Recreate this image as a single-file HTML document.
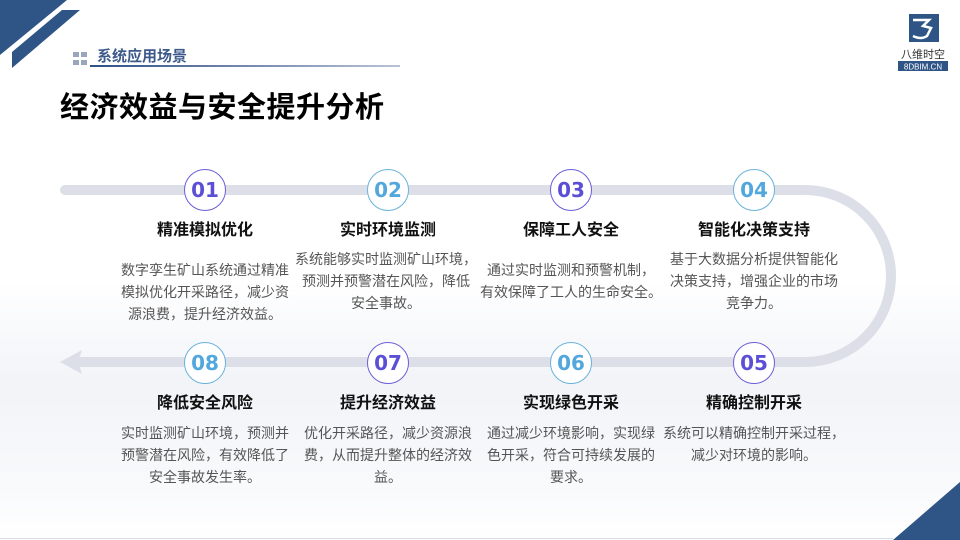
<!DOCTYPE html>
<html><head><meta charset="utf-8"><style>
body{margin:0;width:960px;height:540px;overflow:hidden;background:#fff;font-family:"Liberation Sans","Noto Sans CJK SC",sans-serif;position:relative}
.a{position:absolute}
.c{position:absolute;width:42px;height:42px;border-radius:50%;background:#fff;border:1.5px solid;box-sizing:border-box;text-align:center;line-height:40px;font-size:20px;font-weight:bold;font-family:"DejaVu Sans","Liberation Sans",sans-serif}
.p{color:#5b4fd6;border-color:#6a5fd8}
.b{color:#52a8dc;border-color:#6ab2dc}
.t{position:absolute;width:200px;text-align:center;font-size:16px;font-weight:bold;color:#111}
.d{position:absolute;width:220px;text-align:center;font-size:14px;line-height:22px;color:#555;white-space:nowrap}
</style></head><body>
<div class="a" style="left:0;top:280px;width:960px;height:260px;background:linear-gradient(180deg,#fff 0%,#eef1f6 40%,#f4f6f9 70%,#fff 100%);opacity:.8"></div>
<svg class="a" style="left:0;top:0" width="960" height="540">
<polygon points="0,0 67,0 0,55" fill="#2f5587"/>
<polygon points="62,10 80,10 12,68 12,52" fill="#2f5587"/>
<polygon points="893,540 960,482 960,540" fill="#2f5587"/>
<line x1="0" y1="538.5" x2="893" y2="538.5" stroke="#d8dbe2" stroke-width="1"/>
<defs><linearGradient id="g" x1="0" x2="1"><stop offset="0" stop-color="#2f4f85"/><stop offset="1" stop-color="#b9c3d6"/></linearGradient></defs>
<rect x="90" y="65" width="310" height="2" fill="url(#g)"/>
<rect x="73" y="52" width="6" height="5" fill="#9aa6bb"/><rect x="81" y="52" width="6" height="5" fill="#9aa6bb"/>
<rect x="73" y="60" width="6" height="5" fill="#9aa6bb"/><rect x="81" y="60" width="6" height="5" fill="#9aa6bb"/>
<path d="M65 190 H805 A86 86 0 0 1 805 362 H80" fill="none" stroke="#dcdfe8" stroke-width="10" stroke-linecap="round"/>
<polygon points="60,362 82,350 78,362 82,374" fill="#dcdfe8"/>
<rect x="909" y="14" width="30" height="28" fill="#2f5587"/>
<path d="M913 20 h16 l-6 6 l8 2 l-4 8 q-6 4 -14 0" fill="none" stroke="#fff" stroke-width="2.5"/>
<rect x="898" y="61" width="50" height="10" fill="#2f5587"/>
<text x="923" y="69.5" font-size="8" fill="#fff" text-anchor="middle" font-family="Liberation Sans">8DBIM.CN</text>
<text x="923" y="58" font-size="11" fill="#333" text-anchor="middle" font-family="Noto Sans CJK SC">八维时空</text>
</svg>
<div class="a" style="left:97px;top:45px;font-size:15px;font-weight:bold;color:#3d5a8a">系统应用场景</div>
<div class="a" style="left:60px;top:84px;font-size:29px;font-weight:bold;color:#000;letter-spacing:.5px">经济效益与安全提升分析</div>

<div class="c p" style="left:184px;top:169px">01</div>
<div class="c b" style="left:367px;top:169px">02</div>
<div class="c p" style="left:550px;top:169px">03</div>
<div class="c b" style="left:733px;top:169px">04</div>
<div class="c b" style="left:184px;top:342px">08</div>
<div class="c p" style="left:367px;top:342px">07</div>
<div class="c b" style="left:550px;top:342px">06</div>
<div class="c p" style="left:733px;top:342px">05</div>

<div class="t" style="left:105px;top:216px">精准模拟优化</div>
<div class="t" style="left:288px;top:216px">实时环境监测</div>
<div class="t" style="left:471px;top:216px">保障工人安全</div>
<div class="t" style="left:654px;top:216px">智能化决策支持</div>
<div class="t" style="left:105px;top:389px">降低安全风险</div>
<div class="t" style="left:288px;top:389px">提升经济效益</div>
<div class="t" style="left:471px;top:389px">实现绿色开采</div>
<div class="t" style="left:654px;top:389px">精确控制开采</div>

<div class="d" style="left:95px;top:259px">数字孪生矿山系统通过精准<br>模拟优化开采路径，减少资<br>源浪费，提升经济效益。</div>
<div class="d" style="left:276px;top:248px">系统能够实时监测矿山环境，<br>预测并预警潜在风险，降低<br>安全事故。</div>
<div class="d" style="left:461px;top:259px">通过实时监测和预警机制，<br>有效保障了工人的生命安全。</div>
<div class="d" style="left:644px;top:248px">基于大数据分析提供智能化<br>决策支持，增强企业的市场<br>竞争力。</div>
<div class="d" style="left:95px;top:422px">实时监测矿山环境，预测并<br>预警潜在风险，有效降低了<br>安全事故发生率。</div>
<div class="d" style="left:278px;top:422px">优化开采路径，减少资源浪<br>费，从而提升整体的经济效<br>益。</div>
<div class="d" style="left:461px;top:422px">通过减少环境影响，实现绿<br>色开采，符合可持续发展的<br>要求。</div>
<div class="d" style="left:644px;top:422px">系统可以精确控制开采过程，<br>减少对环境的影响。</div>
</body></html>
